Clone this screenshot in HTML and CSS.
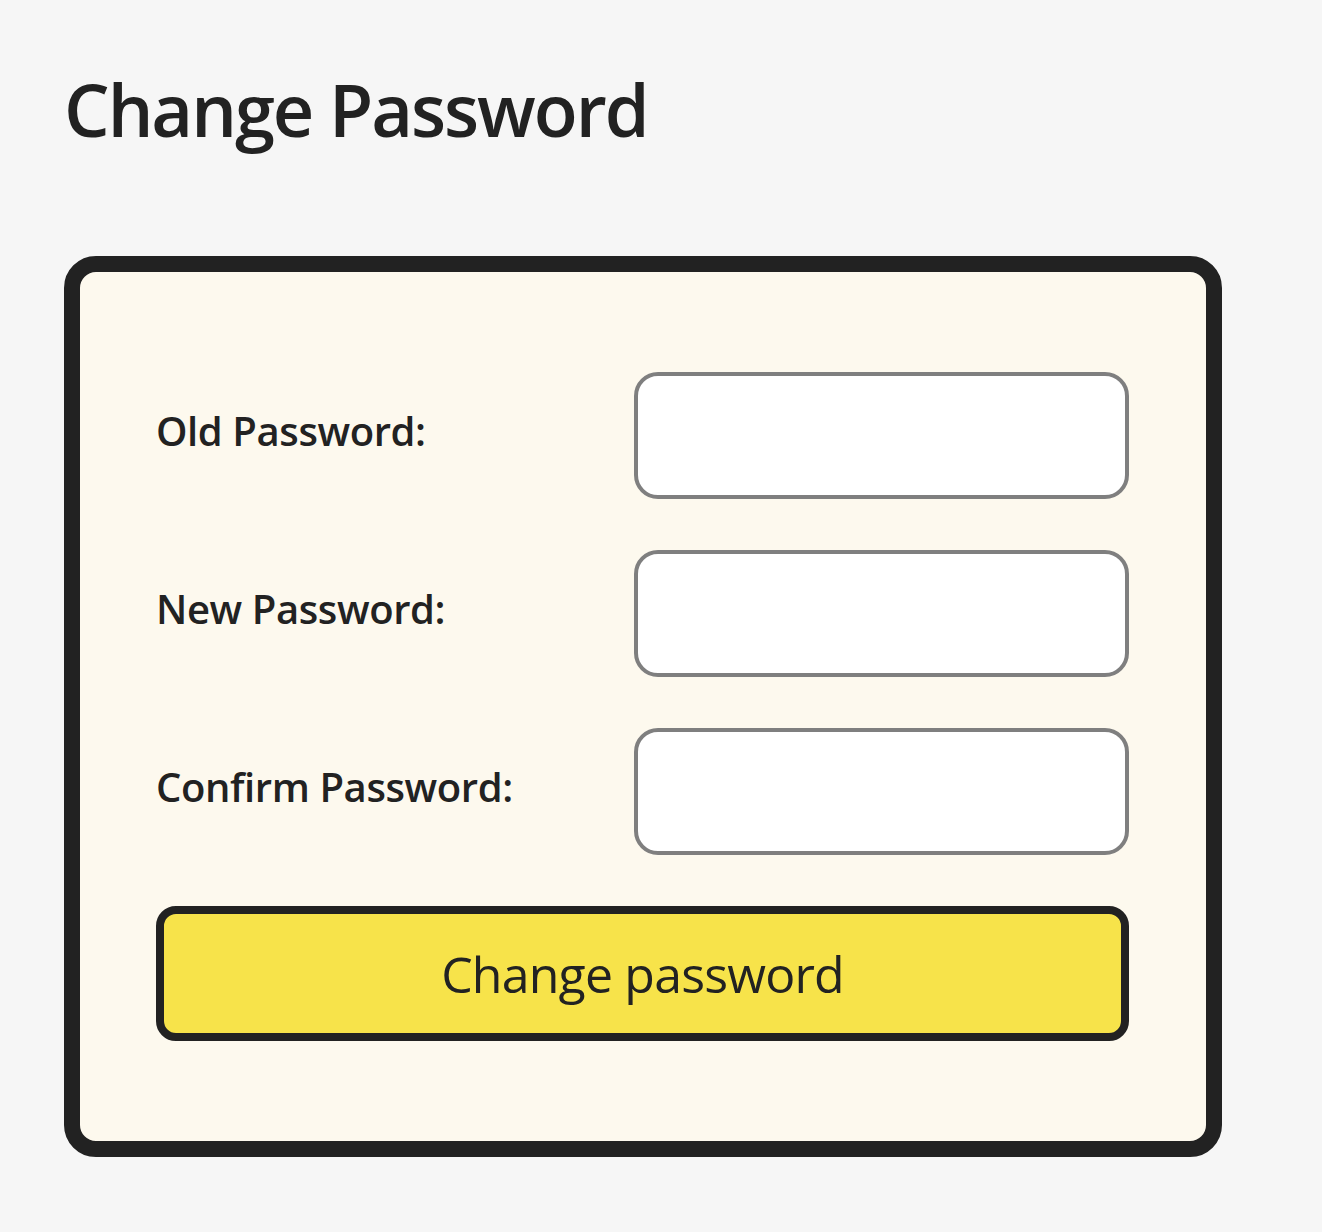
FILE: index.html
```html
<!DOCTYPE html>
<html lang="en">
<head>
<meta charset="utf-8">
<title>Change Password</title>
<link rel="stylesheet" href="styles.css">
</head>
<body>
<main class="page">
  <h1 class="title">Change Password</h1>
  <form class="card">
    <label class="label" for="old">Old Password:</label>
    <input class="field" id="old" type="password">
    <label class="label" for="new">New Password:</label>
    <input class="field" id="new" type="password">
    <label class="label" for="confirm">Confirm Password:</label>
    <input class="field" id="confirm" type="password">
    <button class="submit" type="button">Change password</button>
  </form>
</main>
</body>
</html>
```

FILE: styles.css
```css
html, body {
  margin: 0;
  padding: 0;
  background: #f6f6f6;
}

body {
  font-family: "Open Sans", "Liberation Sans", sans-serif;
  color: #222222;
}

.page {
  padding: 73px 100px 0 64px;
}

.title {
  margin: 0;
  font-size: 72px;
  line-height: 1;
  font-weight: 600;
  letter-spacing: -2px;
}

.card {
  margin-top: 111px;
  box-sizing: border-box;
  width: 1158px;
  border: 16px solid #222222;
  border-radius: 32px;
  background: #fdf9ee;
  padding: 100px 77px 100px 76px;
  display: grid;
  grid-template-columns: 1fr 495px;
  row-gap: 51px;
  align-items: center;
}

.label {
  font-size: 40px;
  line-height: 1;
  padding-bottom: 10px;
  font-weight: 600;
  letter-spacing: -0.4px;
}

.field {
  box-sizing: border-box;
  height: 127px;
  width: 495px;
  margin: 0;
  border: 4px solid #7f7f7f;
  border-radius: 24px;
  background: #ffffff;
}

.submit {
  grid-column: 1 / -1;
  box-sizing: border-box;
  height: 135px;
  margin: 0;
  border: 8px solid #222222;
  border-radius: 20px;
  background: #f7e34a;
  color: #222222;
  font-family: inherit;
  font-size: 50px;
  font-weight: 400;
  letter-spacing: -0.8px;
}
```
